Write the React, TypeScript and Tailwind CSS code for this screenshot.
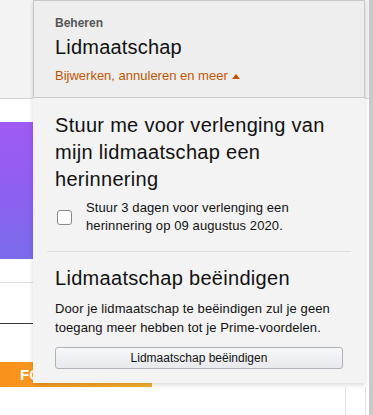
import React from "react";

export default function App() {
  return (
    <div
      className="relative w-[373px] h-[415px] overflow-hidden bg-white flex"
      style={{ fontFamily: '"Liberation Sans", Arial, sans-serif' }}
    >
      {/* Background page */}
      <div className="flex-1 flex flex-col">
        <div className="h-[99px] shrink-0 bg-[#f3f3f3] border-b border-[#d6d6d6]" />
        <div className="h-[23px] shrink-0" />
        <div className="h-[137px] shrink-0 w-[320px] bg-gradient-to-b from-[#a05af2] via-[#8e60f0] to-[#7a6cec]" />
        <div className="h-[23px] shrink-0" />
        <div className="h-px shrink-0 w-[300px] bg-[#dddddd]" />
        <div className="h-[40px] shrink-0" />
        <div className="h-px shrink-0 w-[300px] bg-[#3a3a3a]" />
        <div className="h-[38px] shrink-0" />
        <div className="h-[25px] shrink-0 w-[152px] bg-gradient-to-r from-[#f7911c] to-[#f7b12c] flex items-center pl-[20px]">
          <span className="text-white font-bold text-[15px] leading-none">FO</span>
        </div>
        <div className="flex-1 flex">
          <div className="ml-[345px] w-[21px] border-l border-r border-[#e2e2e2]" />
        </div>
      </div>
      <div className="w-[4px] shrink-0 bg-[#c9c9c9]" />

      {/* Popover */}
      <div className="absolute left-[33px] top-0 w-[332px] flex flex-col shadow-[0_2px_5px_rgba(0,0,0,0.15)]">
        <div className="bg-[#eeeeee] border border-[#c9c9c9] pl-[21px] pt-[14px] pb-[12px]">
          <div className="text-[12px] leading-[16px] font-bold text-[#555555]">Beheren</div>
          <div className="mt-[3px] text-[20px] leading-[27px] tracking-[0.2px] text-[#111111]">Lidmaatschap</div>
          <div className="mt-[5px] flex items-center text-[13px] leading-[19px] text-[#c45500]">
            <span>Bijwerken, annuleren en meer</span>
            <svg className="ml-[4px] mt-[1px]" width="8" height="5" viewBox="0 0 8 5">
              <polygon points="0,5 8,5 4,0" fill="#c45500" />
            </svg>
          </div>
        </div>
        <div className="bg-[#f3f3f3] px-[22px] pt-[14px] pb-[14px] text-[#111111]">
          <div className="text-[20px] leading-[27px] tracking-[0.3px]">
            Stuur me voor verlenging van mijn lidmaatschap een herinnering
          </div>
          <div className="mt-[6px] flex items-center gap-[14px] pl-[2px]">
            <div className="w-[15px] h-[15px] shrink-0 rounded-[3px] border border-[#8a8a8a] bg-white" />
            <div className="text-[13px] leading-[18px] tracking-[0.1px]">
              Stuur 3 dagen voor verlenging een herinnering op 09 augustus 2020.
            </div>
          </div>
          <div className="mt-[16px] -mx-[8px] h-px bg-[#dddddd]" />
          <div className="mt-[13px] text-[20px] leading-[27px] tracking-[0.3px]">Lidmaatschap beëindigen</div>
          <div className="mt-[7px] text-[13px] leading-[19px] tracking-[0.1px]">
            Door je lidmaatschap te beëindigen zul je geen toegang meer hebben tot je Prime-voordelen.
          </div>
          <button className="mt-[10px] w-full h-[22px] rounded-[3px] border border-[#adb1b8] bg-gradient-to-b from-[#f7f8fa] to-[#e7e9ec] text-[12px] leading-none text-[#111111] flex items-center justify-center">
            Lidmaatschap beëindigen
          </button>
        </div>
      </div>
    </div>
  );
}
